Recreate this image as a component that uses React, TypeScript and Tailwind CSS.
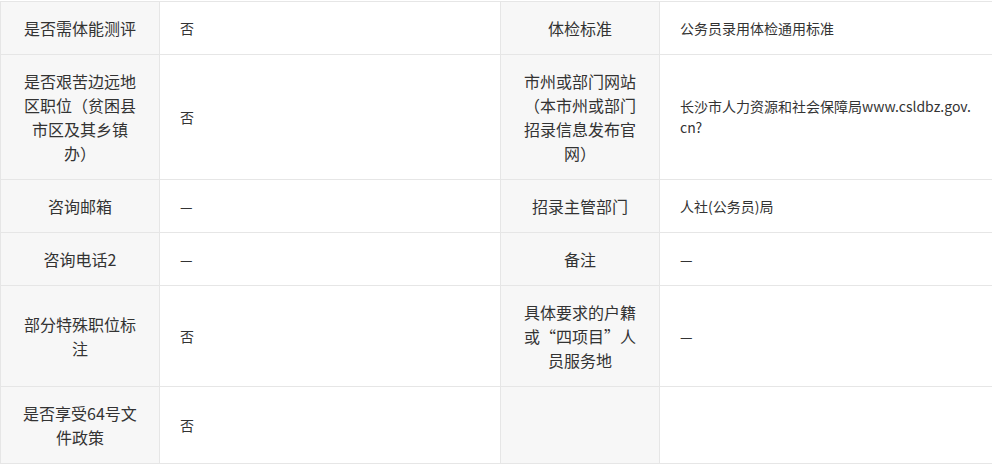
const rows: [string, React.ReactNode, string, React.ReactNode][] = [
  ['是否需体能测评', '否', '体检标准', '公务员录用体检通用标准'],
  [
    '是否艰苦边远地区职位（贫困县市区及其乡镇办）',
    '否',
    '市州或部门网站（本市州或部门招录信息发布官网）',
    <>
      长沙市人力资源和社会保障局www.csldbz.gov.
      <br />
      cn?
    </>,
  ],
  ['咨询邮箱', '—', '招录主管部门', '人社(公务员)局'],
  ['咨询电话2', '—', '备注', '—'],
  ['部分特殊职位标注', '否', '具体要求的户籍或“四项目”人员服务地', '—'],
  ['是否享受64号文件政策', '否', '', ''],
];

const Label = ({ children }: { children: React.ReactNode }) => (
  <div className="bg-[#f7f7f7] px-5 py-3.5 flex items-center justify-center text-center text-base leading-6 text-[#333]">
    <span>{children}</span>
  </div>
);

const Value = ({ children }: { children: React.ReactNode }) => (
  <div className="bg-white pl-5 pr-4 py-3.5 flex items-center text-sm leading-[21px] text-[#333]">
    <span>{children}</span>
  </div>
);

export default function App() {
  return (
    <div
      className="w-[992px] h-[466px] overflow-hidden bg-white pt-px"
      style={{ fontFamily: '"Noto Sans CJK SC", "Noto Sans", sans-serif' }}
    >
      <div className="w-[1005px] grid grid-cols-[158px_340px_158px_1fr] gap-px p-px bg-[#e6e6e6]">
        {rows.map((r, i) => (
          <div key={i} className="contents">
            <Label>{r[0]}</Label>
            <Value>{r[1]}</Value>
            <Label>{r[2]}</Label>
            <Value>{r[3]}</Value>
          </div>
        ))}
      </div>
    </div>
  );
}
